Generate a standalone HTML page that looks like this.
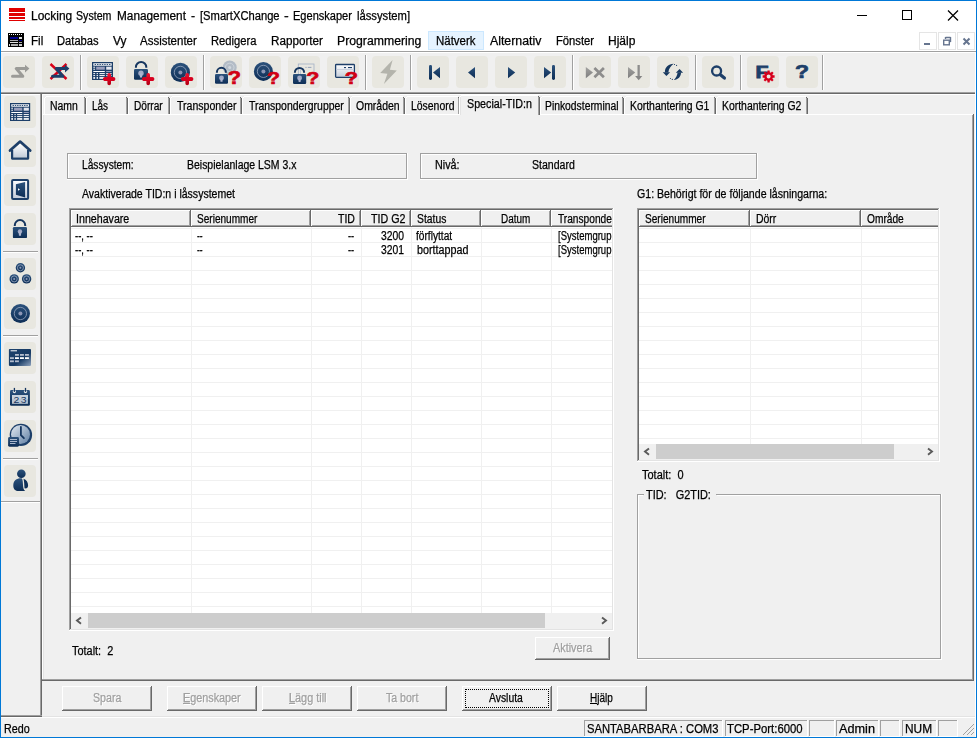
<!DOCTYPE html>
<html lang="sv"><head><meta charset="utf-8"><title>Locking System Management</title><style>
html,body{margin:0;padding:0}
body{width:977px;height:738px;overflow:hidden;background:#f0f0f0;position:relative;font-family:"Liberation Sans",sans-serif;}
body div,body span.t,body svg{position:absolute}
span.t{white-space:pre;display:block;transform-origin:0 0;-webkit-text-stroke:0.25px currentColor}
u{text-decoration:underline;text-underline-offset:1px}
</style></head><body>
<div style="left:0px;top:0px;width:977px;height:738px;background:#0078d7;"></div>
<div style="left:1px;top:1px;width:975px;height:50px;background:#ffffff;"></div>
<div style="left:1px;top:51px;width:975px;height:1px;background:#a0a0a0;"></div>
<div style="left:1px;top:52px;width:975px;height:1px;background:#ffffff;"></div>
<div style="left:1px;top:53px;width:975px;height:684px;background:#f0f0f0;"></div>
<div style="left:9px;top:8px;width:16px;height:4px;background:#e00000;"></div>
<div style="left:9px;top:13px;width:16px;height:3px;background:#e00000;"></div>
<div style="left:9px;top:17px;width:16px;height:2px;background:#e00000;"></div>
<div style="left:9px;top:20px;width:16px;height:1px;background:#e00000;"></div>
<span class="t" style="left:30.50px;top:8px;font-size:12px;line-height:16px;color:#000;transform:scaleX(0.9954);">Locking </span>
<span class="t" style="left:76.20px;top:8px;font-size:12px;line-height:16px;color:#000;transform:scaleX(0.8847);">System </span>
<span class="t" style="left:117.10px;top:8px;font-size:12px;line-height:16px;color:#000;transform:scaleX(0.9843);">Management </span>
<span class="t" style="left:190.80px;top:8px;font-size:12px;line-height:16px;color:#000;transform:scaleX(1.0250);">- </span>
<span class="t" style="left:200.00px;top:8px;font-size:12px;line-height:16px;color:#000;transform:scaleX(0.9323);">[SmartXChange </span>
<span class="t" style="left:284.30px;top:8px;font-size:12px;line-height:16px;color:#000;transform:scaleX(1.1750);">- </span>
<span class="t" style="left:292.90px;top:8px;font-size:12px;line-height:16px;color:#000;transform:scaleX(0.9196);">Egenskaper </span>
<span class="t" style="left:356.50px;top:8px;font-size:12px;line-height:16px;color:#000;transform:scaleX(0.9371);">låssystem]</span>
<svg style="left:850px;top:1px" width="126" height="30" viewBox="0 0 126 30"><g fill="none" stroke="#000" stroke-width="1"><path d="M7 14.500H17"/><rect x="52.5" y="9.5" width="9" height="9"/><path d="M98 9.500L108 19.500M108 9.500L98 19.500" stroke-width="1.250"/></g></svg>
<svg style="left:8px;top:33px" width="16" height="14" viewBox="0 0 16 14"><rect x="0" y="0" width="16" height="14" fill="#000"/><path d="M1 1h1v1h-1zM3 1h1v1h-1zM5 1h1v1h-1zM7 1h1v1h-1zM9 1h1v1h-1zM11 1h1v1h-1zM13 1h1v1h-1z" fill="#fff"/><rect x="2" y="4" width="8" height="2" fill="#00008b"/><rect x="11" y="4" width="3" height="2" fill="#ddd"/><rect x="2" y="7" width="8" height="1" fill="#aaa"/><rect x="11" y="7" width="3" height="1" fill="#00008b"/><rect x="2" y="9" width="8" height="1" fill="#ddd"/><rect x="11" y="9" width="3" height="1" fill="#aaa"/><rect x="1" y="11" width="1" height="2" fill="#ddd"/><rect x="3" y="11" width="7" height="2" fill="#aaa"/><rect x="11" y="11" width="3" height="2" fill="#ccc"/></svg>
<div style="left:428px;top:31px;width:56px;height:19px;background:#e5f3ff;box-sizing:border-box;border:1px solid #cce8ff"></div>
<span class="t" style="left:31.40px;top:33px;font-size:12px;line-height:16px;color:#000;transform:scaleX(0.9670);">Fil</span>
<span class="t" style="left:57.40px;top:33px;font-size:12px;line-height:16px;color:#000;transform:scaleX(0.9307);">Databas</span>
<span class="t" style="left:113.20px;top:33px;font-size:12px;line-height:16px;color:#000;transform:scaleX(0.9957);">Vy</span>
<span class="t" style="left:140.20px;top:33px;font-size:12px;line-height:16px;color:#000;transform:scaleX(0.9569);">Assistenter</span>
<span class="t" style="left:211.00px;top:33px;font-size:12px;line-height:16px;color:#000;transform:scaleX(0.9342);">Redigera</span>
<span class="t" style="left:271.30px;top:33px;font-size:12px;line-height:16px;color:#000;transform:scaleX(0.9744);">Rapporter</span>
<span class="t" style="left:337.00px;top:33px;font-size:12px;line-height:16px;color:#000;transform:scaleX(1.0205);">Programmering</span>
<span class="t" style="left:435.50px;top:33px;font-size:12px;line-height:16px;color:#000;transform:scaleX(0.9565);">Nätverk</span>
<span class="t" style="left:490.00px;top:33px;font-size:12px;line-height:16px;color:#000;transform:scaleX(1.0256);">Alternativ</span>
<span class="t" style="left:555.50px;top:33px;font-size:12px;line-height:16px;color:#000;transform:scaleX(0.9365);">Fönster</span>
<span class="t" style="left:608.30px;top:33px;font-size:12px;line-height:16px;color:#000;transform:scaleX(1.0010);">Hjälp</span>
<div style="left:919px;top:32px;width:18px;height:18px;background:#ffffff;box-sizing:border-box;border:1px solid #e5e5e5"></div>
<div style="left:938px;top:32px;width:18px;height:18px;background:#ffffff;box-sizing:border-box;border:1px solid #e5e5e5"></div>
<div style="left:957px;top:32px;width:18px;height:18px;background:#ffffff;box-sizing:border-box;border:1px solid #e5e5e5"></div>
<svg style="left:919px;top:32px" width="56" height="18" viewBox="0 0 56 18"><g fill="none" stroke="#66758f"><path d="M5 12h6" stroke-width="2"/><path d="M26.5 5.5h5M26.500 5v2M31.5 5v5M31.5 9.500h-1.500" stroke-width="1.400"/><rect x="24.700" y="8.200" width="5.600" height="4.600" stroke-width="1.400"/><path d="M44.500 6.500l6 6M50.500 6.500l-6 6" stroke-width="2"/></g></svg>
<div style="left:3px;top:56px;width:32px;height:32px;background:#e8e7e0;border-radius:4px"></div>
<div style="left:42px;top:56px;width:32px;height:32px;background:#e8e7e0;border-radius:4px"></div>
<div style="left:87px;top:56px;width:32px;height:32px;background:#e8e7e0;border-radius:4px"></div>
<div style="left:126px;top:56px;width:32px;height:32px;background:#e8e7e0;border-radius:4px"></div>
<div style="left:165px;top:56px;width:32px;height:32px;background:#e8e7e0;border-radius:4px"></div>
<div style="left:210px;top:56px;width:32px;height:32px;background:#e8e7e0;border-radius:4px"></div>
<div style="left:249px;top:56px;width:32px;height:32px;background:#e8e7e0;border-radius:4px"></div>
<div style="left:288px;top:56px;width:32px;height:32px;background:#e8e7e0;border-radius:4px"></div>
<div style="left:327px;top:56px;width:32px;height:32px;background:#e8e7e0;border-radius:4px"></div>
<div style="left:372px;top:56px;width:32px;height:32px;background:#e8e7e0;border-radius:4px"></div>
<div style="left:417px;top:56px;width:32px;height:32px;background:#e8e7e0;border-radius:4px"></div>
<div style="left:456px;top:56px;width:32px;height:32px;background:#e8e7e0;border-radius:4px"></div>
<div style="left:495px;top:56px;width:32px;height:32px;background:#e8e7e0;border-radius:4px"></div>
<div style="left:534px;top:56px;width:32px;height:32px;background:#e8e7e0;border-radius:4px"></div>
<div style="left:579px;top:56px;width:32px;height:32px;background:#e8e7e0;border-radius:4px"></div>
<div style="left:618px;top:56px;width:32px;height:32px;background:#e8e7e0;border-radius:4px"></div>
<div style="left:657px;top:56px;width:32px;height:32px;background:#e8e7e0;border-radius:4px"></div>
<div style="left:702px;top:56px;width:32px;height:32px;background:#e8e7e0;border-radius:4px"></div>
<div style="left:747px;top:56px;width:32px;height:32px;background:#e8e7e0;border-radius:4px"></div>
<div style="left:786px;top:56px;width:32px;height:32px;background:#e8e7e0;border-radius:4px"></div>
<div style="left:80px;top:55px;width:1px;height:35px;background:#a0a0a0;"></div>
<div style="left:81px;top:55px;width:1px;height:35px;background:#ffffff;"></div>
<div style="left:203px;top:55px;width:1px;height:35px;background:#a0a0a0;"></div>
<div style="left:204px;top:55px;width:1px;height:35px;background:#ffffff;"></div>
<div style="left:365px;top:55px;width:1px;height:35px;background:#a0a0a0;"></div>
<div style="left:366px;top:55px;width:1px;height:35px;background:#ffffff;"></div>
<div style="left:410px;top:55px;width:1px;height:35px;background:#a0a0a0;"></div>
<div style="left:411px;top:55px;width:1px;height:35px;background:#ffffff;"></div>
<div style="left:572px;top:55px;width:1px;height:35px;background:#a0a0a0;"></div>
<div style="left:573px;top:55px;width:1px;height:35px;background:#ffffff;"></div>
<div style="left:695px;top:55px;width:1px;height:35px;background:#a0a0a0;"></div>
<div style="left:696px;top:55px;width:1px;height:35px;background:#ffffff;"></div>
<div style="left:740px;top:55px;width:1px;height:35px;background:#a0a0a0;"></div>
<div style="left:741px;top:55px;width:1px;height:35px;background:#ffffff;"></div>
<div style="left:822px;top:55px;width:1px;height:35px;background:#a0a0a0;"></div>
<div style="left:823px;top:55px;width:1px;height:35px;background:#ffffff;"></div>
<div style="left:1px;top:92px;width:974px;height:1px;background:#a0a0a0;"></div>
<div style="left:1px;top:93px;width:974px;height:1px;background:#696969;"></div>
<div style="left:975px;top:53px;width:1px;height:684px;background:#ffffff;"></div>
<div style="left:1px;top:94px;width:974px;height:1px;background:#ffffff;"></div>
<svg style="left:0;top:56px" width="830" height="32" viewBox="0 0 830 32"><defs><linearGradient id="nv" x1="0" y1="0" x2="0" y2="1"><stop offset="0" stop-color="#2c527c"/><stop offset="1" stop-color="#0d2e56"/></linearGradient><linearGradient id="rd" x1="0" y1="0" x2="0" y2="1"><stop offset="0" stop-color="#e8102c"/><stop offset="1" stop-color="#b90016"/></linearGradient><linearGradient id="lt" x1="0" y1="0" x2="0" y2="1"><stop offset="0" stop-color="#ffffff"/><stop offset="1" stop-color="#c3ccd9"/></linearGradient><linearGradient id="gy" x1="0" y1="0" x2="0" y2="1"><stop offset="0" stop-color="#a2a2a0"/><stop offset="1" stop-color="#7e7e7e"/></linearGradient><linearGradient id="ck" x1="0" y1="0" x2="1" y2="1"><stop offset="0" stop-color="#e4ebf2"/><stop offset="1" stop-color="#5f7ea3"/></linearGradient><linearGradient id="tb" x1="0" y1="0" x2="1" y2="1"><stop offset="0" stop-color="#1d426d"/><stop offset="0.6" stop-color="#173a64"/><stop offset="1" stop-color="#8fa3bd"/></linearGradient></defs><g transform="translate(3 0)"><g transform="translate(0 0)"><path d="M9.500 20.300H19.800L13.200 12.600H23" fill="none" stroke="#9b9b97" stroke-width="3" stroke-linecap="round" stroke-linejoin="round"/><path d="M22 8.700L26.400 12.600L22 16.500Z" fill="#9b9b97"/></g></g><g transform="translate(42 0)"><path d="M8.500 8L24.500 23M24.500 8L8.500 23" stroke="#d80018" stroke-width="2.400" fill="none"/><g transform="translate(1 0)"><path d="M9.500 20.300H19.800L13.200 12.600H23" fill="none" stroke="#1d3f69" stroke-width="3" stroke-linecap="round" stroke-linejoin="round"/><path d="M22 8.700L26.400 12.600L22 16.500Z" fill="#1d3f69"/></g></g><g transform="translate(87 0)"><g transform="translate(5 6)"><rect x="0" y="0" width="21" height="18" fill="#1d3f69"/><rect x="1.300" y="1.300" width="18.400" height="2.400" fill="#fff"/><rect x="2.6" y="2.100" width="1.500" height="0.900" fill="#1d3f69"/><rect x="5.0" y="2.100" width="1.500" height="0.900" fill="#1d3f69"/><rect x="7.4" y="2.100" width="1.500" height="0.900" fill="#1d3f69"/><rect x="9.8" y="2.100" width="1.500" height="0.900" fill="#1d3f69"/><rect x="12.2" y="2.100" width="1.500" height="0.900" fill="#1d3f69"/><rect x="14.6" y="2.100" width="1.500" height="0.900" fill="#1d3f69"/><rect x="17.0" y="2.100" width="1.500" height="0.900" fill="#1d3f69"/><rect x="1.300" y="4.700" width="1.800" height="1" fill="#fff"/><rect x="1.300" y="6.700" width="1.800" height="1" fill="#fff"/><rect x="4.200" y="4.700" width="8.600" height="3" fill="#9a9fbd"/><rect x="14.200" y="4.700" width="5.400" height="3" fill="#e4e6ee"/><rect x="1.300" y="9" width="11.500" height="1" fill="#fff"/><rect x="14.200" y="9" width="5.400" height="1" fill="#9a9fbd"/><rect x="1.300" y="11.1" width="1.800" height="1" fill="#fff"/><rect x="4.600" y="11.1" width="1.400" height="1" fill="#fff"/><rect x="7.400" y="11.1" width="5.400" height="1" fill="#fff"/><rect x="14.200" y="11.1" width="5.400" height="1" fill="#fff"/><rect x="1.300" y="13.1" width="1.800" height="1" fill="#fff"/><rect x="4.600" y="13.1" width="1.400" height="1" fill="#fff"/><rect x="7.400" y="13.1" width="5.400" height="1" fill="#fff"/><rect x="14.200" y="13.1" width="5.400" height="1" fill="#fff"/><rect x="1.300" y="15.1" width="1.800" height="1.7" fill="#fff"/><rect x="4.600" y="15.1" width="1.400" height="1.7" fill="#fff"/><rect x="7.400" y="15.1" width="5.400" height="1.7" fill="#fff"/><rect x="14.200" y="15.1" width="5.400" height="1.7" fill="#fff"/></g><path d="M17.9 23.1H26.5M22.2 18.8V27.400000000000002" stroke="url(#rd)" stroke-width="3.600" stroke-linecap="round" fill="none"/><path d="M17.9 23.1H26.5" stroke="#d8001e" stroke-width="3.600" stroke-linecap="round" fill="none"/></g><g transform="translate(126 0)"><path d="M9.90 11.70V11.20A5.20 5.20 0 0 1 20.30 11.20V11.70" fill="none" stroke="#16365f" stroke-width="2.0"/><rect x="8" y="13" width="14" height="10.8" rx="1.200" fill="url(#nv)"/><circle cx="15.00" cy="17.32" r="2.70" fill="#a3abc8"/><rect x="13.90" y="17.32" width="2.200" height="4.3" rx="0.600" fill="#aeb5cf"/><path d="M17.9 23.1H26.5M22.2 18.8V27.400000000000002" stroke="url(#rd)" stroke-width="3.600" stroke-linecap="round" fill="none"/><path d="M17.9 23.1H26.5" stroke="#d8001e" stroke-width="3.600" stroke-linecap="round" fill="none"/></g><g transform="translate(165 0)"><circle cx="15.4" cy="16.4" r="9.6" fill="url(#nv)"/><circle cx="15.4" cy="16.4" r="6.14" fill="none" stroke="#a9b5ca" stroke-width="0.700"/><circle cx="15.4" cy="16.4" r="2.02" fill="#8d97b6"/><path d="M17.9 23.1H26.5M22.2 18.8V27.400000000000002" stroke="url(#rd)" stroke-width="3.600" stroke-linecap="round" fill="none"/><path d="M17.9 23.1H26.5" stroke="#d8001e" stroke-width="3.600" stroke-linecap="round" fill="none"/></g><g transform="translate(210 0)"><circle cx="19.7" cy="11.5" r="7.0" fill="#b3bcc6"/><circle cx="19.7" cy="11.5" r="4.3" fill="none" stroke="#d3d9df" stroke-width="0.800"/><circle cx="19.7" cy="11.5" r="1.5" fill="#d3d9df"/><path d="M6.90 16.70V16.30A4.50 4.50 0 0 1 15.90 16.30V16.70" fill="none" stroke="#16365f" stroke-width="2.0"/><rect x="5" y="18" width="13" height="9.75" rx="1.200" fill="url(#nv)"/><circle cx="11.50" cy="21.90" r="2.44" fill="#a3abc8"/><rect x="10.40" y="21.90" width="2.200" height="3.9" rx="0.600" fill="#aeb5cf"/><text transform="translate(24.40 27.70) scale(1.245 1)" text-anchor="middle" font-family="Liberation Sans, sans-serif" font-weight="bold" font-size="17.42" fill="#d10014" stroke="#d10014" stroke-width="0.6" stroke-linejoin="round">?</text></g><g transform="translate(249 0)"><circle cx="14.4" cy="15.4" r="9.5" fill="url(#nv)"/><circle cx="14.4" cy="15.4" r="6.08" fill="none" stroke="#a9b5ca" stroke-width="0.700"/><circle cx="14.4" cy="15.4" r="1.99" fill="#8d97b6"/><text transform="translate(24.50 27.70) scale(1.225 1)" text-anchor="middle" font-family="Liberation Sans, sans-serif" font-weight="bold" font-size="17.42" fill="#d10014" stroke="#d10014" stroke-width="0.6" stroke-linejoin="round">?</text></g><g transform="translate(288 0)"><rect x="10.300" y="8" width="15.700" height="12" fill="none" stroke="#a4b1c6" stroke-width="0.800"/><rect x="17.400" y="10.900" width="1.200" height="0.900" fill="#8c9bb5"/><rect x="19.800" y="10.900" width="3.600" height="0.900" fill="#8c9bb5"/><path d="M12.500 14V18" stroke="#a4b1c6" stroke-width="0.600"/><path d="M6.90 16.70V16.50A4.60 4.60 0 0 1 16.10 16.50V16.70" fill="none" stroke="#16365f" stroke-width="2.0"/><rect x="5" y="18" width="13.2" height="9.9" rx="1.200" fill="url(#nv)"/><circle cx="11.60" cy="21.96" r="2.48" fill="#a3abc8"/><rect x="10.50" y="21.96" width="2.200" height="4.0" rx="0.600" fill="#aeb5cf"/><text transform="translate(24.85 27.70) scale(1.235 1)" text-anchor="middle" font-family="Liberation Sans, sans-serif" font-weight="bold" font-size="17.42" fill="#d10014" stroke="#d10014" stroke-width="0.6" stroke-linejoin="round">?</text></g><g transform="translate(327 0)"><rect x="8.600" y="8.500" width="18.800" height="12.800" rx="0.800" fill="url(#lt)" stroke="#1d3f69" stroke-width="1.300"/><rect x="9.300" y="13" width="17.400" height="1" fill="#c9d0dd"/><rect x="17" y="11" width="2" height="1.100" fill="#1d3f69"/><rect x="21" y="11" width="4" height="1.100" fill="#1d3f69"/><text transform="translate(24.45 27.70) scale(1.255 1)" text-anchor="middle" font-family="Liberation Sans, sans-serif" font-weight="bold" font-size="17.42" fill="#d10014" stroke="#d10014" stroke-width="0.6" stroke-linejoin="round">?</text></g><g transform="translate(372 0)"><path d="M20.600 4L8.200 16.900L15.400 17.800L11.900 27.900L24.800 14.600L17.900 13.700Z" fill="#b4b4ac"/></g><g transform="translate(417 0)"><rect x="12" y="8.900" width="3" height="15.100" rx="1.400" fill="url(#nv)"/><path d="M16 16.500L23 10.900V22.200Z" fill="url(#nv)"/></g><g transform="translate(456 0)"><path d="M12 16.500L19 10.900V22.200Z" fill="url(#nv)"/></g><g transform="translate(495 0)"><path d="M20.2 16.500L13 10.900V22.200Z" fill="url(#nv)"/></g><g transform="translate(534 0)"><path d="M17.2 16.500L10 10.900V22.200Z" fill="url(#nv)"/><rect x="18" y="8.900" width="3" height="15.100" rx="1.400" fill="url(#nv)"/></g><g transform="translate(579 0)"><path d="M14 16.500L6.8 10.900V22.200Z" fill="url(#gy)"/><path d="M15.400 12L24.900 21.200M24.900 12L15.400 21.200" stroke="#8d8d8c" stroke-width="2.700" fill="none"/></g><g transform="translate(618 0)"><path d="M17.2 16.500L10 10.900V22.200Z" fill="url(#gy)"/><path d="M20.650 9V21" stroke="#8d8d8c" stroke-width="2.300"/><path d="M17.100 20L24.300 20L20.700 24.200Z" fill="#858585"/></g><g transform="translate(657 0)"><g fill="#17385f"><path d="M7.900 16.400C7.800 11.300 11.300 7.800 16.700 7.800C14.300 9.600 11.800 12.400 11.300 16.400Z"/><path d="M5.800 16.200H13.100L9.450 20.100Z"/><circle cx="17.500" cy="8.500" r="0.550"/><circle cx="19.600" cy="9.400" r="0.550"/><path d="M24 16.600C24.100 20.700 21.200 23.900 16.800 23.900C18.800 22.200 20.200 19.800 20.600 16.600Z"/><path d="M18.800 16.800H26.100L22.550 12.900Z"/><circle cx="15.300" cy="23.400" r="0.550"/><circle cx="13.400" cy="22.500" r="0.550"/></g></g><g transform="translate(702 0)"><circle cx="14.600" cy="15" r="4.500" fill="none" stroke="#1d3f69" stroke-width="2.300"/><path d="M18.700 19L22.400 22.100" stroke="#1d3f69" stroke-width="3.200" stroke-linecap="round"/></g><g transform="translate(747 0)"><text transform="translate(8.500 21.800) scale(1.250 1)" font-family="Liberation Sans, sans-serif" font-weight="bold" font-size="17.01" fill="#1d3f69" stroke="#1d3f69" stroke-width="0.9">F</text><path d="M27.59 19.36L27.59 21.64L25.84 21.66L25.42 22.68L26.65 23.93L25.03 25.55L23.78 24.32L22.76 24.74L22.74 26.49L20.46 26.49L20.44 24.74L19.42 24.32L18.17 25.55L16.55 23.93L17.78 22.68L17.36 21.66L15.61 21.64L15.61 19.36L17.36 19.34L17.78 18.32L16.55 17.07L18.17 15.45L19.42 16.68L20.44 16.26L20.46 14.51L22.74 14.51L22.76 16.26L23.78 16.68L25.03 15.45L26.65 17.07L25.42 18.32L25.84 19.34ZM23.60 20.5A2 2 0 1 0 19.60 20.5A2 2 0 1 0 23.60 20.5Z" fill="#d6001c" fill-rule="evenodd"/></g><g transform="translate(786 0)"><text transform="translate(16.00 22.25) scale(1.296 1)" text-anchor="middle" font-family="Liberation Sans, sans-serif" font-weight="bold" font-size="17.70" fill="#1d3f69" stroke="#1d3f69" stroke-width="0.7" stroke-linejoin="round">?</text></g></svg>
<div style="left:40px;top:94px;width:1px;height:623px;background:#a0a0a0;"></div>
<div style="left:41px;top:94px;width:1px;height:623px;background:#696969;"></div>
<div style="left:1px;top:715px;width:41px;height:1px;background:#a0a0a0;"></div>
<div style="left:1px;top:716px;width:41px;height:1px;background:#696969;"></div>
<div style="left:4px;top:96px;width:32px;height:32px;background:#e8e7e0;border-radius:4px"></div>
<div style="left:4px;top:135px;width:32px;height:32px;background:#e8e7e0;border-radius:4px"></div>
<div style="left:4px;top:174px;width:32px;height:32px;background:#e8e7e0;border-radius:4px"></div>
<div style="left:4px;top:213px;width:32px;height:32px;background:#e8e7e0;border-radius:4px"></div>
<div style="left:4px;top:258px;width:32px;height:32px;background:#e8e7e0;border-radius:4px"></div>
<div style="left:4px;top:297px;width:32px;height:32px;background:#e8e7e0;border-radius:4px"></div>
<div style="left:4px;top:342px;width:32px;height:32px;background:#e8e7e0;border-radius:4px"></div>
<div style="left:4px;top:381px;width:32px;height:32px;background:#e8e7e0;border-radius:4px"></div>
<div style="left:4px;top:420px;width:32px;height:32px;background:#e8e7e0;border-radius:4px"></div>
<div style="left:4px;top:465px;width:32px;height:32px;background:#e8e7e0;border-radius:4px"></div>
<div style="left:3px;top:251px;width:35px;height:1px;background:#a0a0a0;"></div>
<div style="left:3px;top:252px;width:35px;height:1px;background:#ffffff;"></div>
<div style="left:3px;top:335px;width:35px;height:1px;background:#a0a0a0;"></div>
<div style="left:3px;top:336px;width:35px;height:1px;background:#ffffff;"></div>
<div style="left:3px;top:458px;width:35px;height:1px;background:#a0a0a0;"></div>
<div style="left:3px;top:459px;width:35px;height:1px;background:#ffffff;"></div>
<div style="left:1px;top:501px;width:39px;height:1px;background:#a0a0a0;"></div>
<div style="left:1px;top:502px;width:39px;height:1px;background:#ffffff;"></div>
<svg style="left:4px;top:0" width="32" height="520" viewBox="0 0 32 520"><g transform="translate(0 96)"><g transform="translate(6 7) scale(0.962 1) translate(-6 -7)"><g transform="translate(6 7)"><rect x="0" y="0" width="21" height="18" fill="#1d3f69"/><rect x="1.300" y="1.300" width="18.400" height="2.400" fill="#fff"/><rect x="2.6" y="2.100" width="1.500" height="0.900" fill="#1d3f69"/><rect x="5.0" y="2.100" width="1.500" height="0.900" fill="#1d3f69"/><rect x="7.4" y="2.100" width="1.500" height="0.900" fill="#1d3f69"/><rect x="9.8" y="2.100" width="1.500" height="0.900" fill="#1d3f69"/><rect x="12.2" y="2.100" width="1.500" height="0.900" fill="#1d3f69"/><rect x="14.6" y="2.100" width="1.500" height="0.900" fill="#1d3f69"/><rect x="17.0" y="2.100" width="1.500" height="0.900" fill="#1d3f69"/><rect x="1.300" y="4.700" width="1.800" height="1" fill="#fff"/><rect x="1.300" y="6.700" width="1.800" height="1" fill="#fff"/><rect x="4.200" y="4.700" width="8.600" height="3" fill="#9a9fbd"/><rect x="14.200" y="4.700" width="5.400" height="3" fill="#e4e6ee"/><rect x="1.300" y="9" width="11.500" height="1" fill="#fff"/><rect x="14.200" y="9" width="5.400" height="1" fill="#9a9fbd"/><rect x="1.300" y="11.1" width="1.800" height="1" fill="#fff"/><rect x="4.600" y="11.1" width="1.400" height="1" fill="#fff"/><rect x="7.400" y="11.1" width="5.400" height="1" fill="#fff"/><rect x="14.200" y="11.1" width="5.400" height="1" fill="#fff"/><rect x="1.300" y="13.1" width="1.800" height="1" fill="#fff"/><rect x="4.600" y="13.1" width="1.400" height="1" fill="#fff"/><rect x="7.400" y="13.1" width="5.400" height="1" fill="#fff"/><rect x="14.200" y="13.1" width="5.400" height="1" fill="#fff"/><rect x="1.300" y="15.1" width="1.800" height="1.7" fill="#fff"/><rect x="4.600" y="15.1" width="1.400" height="1.7" fill="#fff"/><rect x="7.400" y="15.1" width="5.400" height="1.7" fill="#fff"/><rect x="14.200" y="15.1" width="5.400" height="1.7" fill="#fff"/></g></g></g><g transform="translate(0 135)"><path d="M9 15.500L16.100 8.800L23.200 15.500V22.600H9Z" fill="url(#lt)"/><path d="M8.100 15V23.600H24.100V15" fill="none" stroke="#1d3f69" stroke-width="2.200" stroke-linejoin="round"/><path d="M6 15.600L16.100 6.600L26.200 15.600" fill="none" stroke="#1d3f69" stroke-width="2.700" stroke-linecap="round" stroke-linejoin="round"/></g><g transform="translate(0 174)"><rect x="8.100" y="5.900" width="16" height="19.100" rx="1" fill="url(#lt)" stroke="#1d3f69" stroke-width="2"/><path d="M11.900 10.200L21.100 8V23.400L11.900 20.800Z" fill="url(#nv)"/><path d="M14 14.200L16 15.500L14 16.800Z" fill="#fff"/></g><g transform="translate(0 213)"><path d="M10.80 13.00V12.30A5.20 5.20 0 0 1 21.20 12.30V13.00" fill="none" stroke="#16365f" stroke-width="2.0"/><rect x="8.9" y="14" width="14.1" height="11.1" rx="1.200" fill="url(#nv)"/><circle cx="15.95" cy="18.44" r="2.20" fill="#a3abc8"/><rect x="14.85" y="18.44" width="2.200" height="4.4" rx="0.600" fill="#aeb5cf"/></g><g transform="translate(0 258)"><circle cx="16.4" cy="9.8" r="4.7" fill="url(#nv)"/><circle cx="16.4" cy="9.8" r="3.01" fill="none" stroke="#a9b5ca" stroke-width="0.700"/><circle cx="16.4" cy="9.8" r="0.99" fill="#8d97b6"/><circle cx="10.2" cy="20.9" r="4.7" fill="url(#nv)"/><circle cx="10.2" cy="20.9" r="3.01" fill="none" stroke="#a9b5ca" stroke-width="0.700"/><circle cx="10.2" cy="20.9" r="0.99" fill="#8d97b6"/><circle cx="22.6" cy="20.9" r="4.7" fill="url(#nv)"/><circle cx="22.6" cy="20.9" r="3.01" fill="none" stroke="#a9b5ca" stroke-width="0.700"/><circle cx="22.6" cy="20.9" r="0.99" fill="#8d97b6"/></g><g transform="translate(0 297)"><circle cx="16.4" cy="16.5" r="9.6" fill="url(#nv)"/><circle cx="16.4" cy="16.5" r="6.14" fill="none" stroke="#a9b5ca" stroke-width="0.700"/><circle cx="16.4" cy="16.5" r="2.02" fill="#8d97b6"/></g><g transform="translate(0 342)"><rect x="4.900" y="6.900" width="22.100" height="17" rx="0.800" fill="url(#tb)"/><rect x="6.600" y="8.300" width="6.400" height="1" fill="#fff"/><rect x="11" y="12" width="3.900" height="1.800" fill="#b3bccd"/><rect x="16" y="12" width="3.900" height="1.800" fill="#b3bccd"/><rect x="21" y="12" width="3.900" height="1.800" fill="#b3bccd"/><rect x="6" y="15.200" width="3.900" height="1.800" fill="#b3bccd"/><rect x="11" y="15.200" width="3.900" height="1.800" fill="#fff"/><rect x="16" y="15.200" width="3.900" height="1.800" fill="#fff"/><rect x="21" y="15.200" width="3.900" height="1.800" fill="#fff"/><rect x="6" y="18.400" width="3.900" height="1.800" fill="#b3bccd"/><rect x="11" y="18.400" width="3.900" height="1.800" fill="#b3bccd"/></g><g transform="translate(0 381)"><rect x="6" y="9.100" width="19.900" height="15.600" rx="1.300" fill="url(#nv)"/><rect x="8" y="14" width="15.900" height="8.800" fill="#b9c5d2"/><rect x="8" y="14" width="15.900" height="4" fill="#c9d3dd"/><circle cx="10.4" cy="10.600" r="1.600" fill="#eceeed"/><rect x="9.75" y="6.900" width="1.300" height="4" fill="#16365f"/><circle cx="21.5" cy="10.600" r="1.600" fill="#eceeed"/><rect x="20.85" y="6.900" width="1.300" height="4" fill="#16365f"/><text transform="translate(16.700 21.700) scale(1.120 1)" text-anchor="middle" font-family="Liberation Sans, sans-serif" font-size="9.3" letter-spacing="1.250" fill="#16365f">23</text></g><g transform="translate(0 420)"><circle cx="16.900" cy="14.900" r="11.200" fill="#1d3f69"/><circle cx="16.500" cy="14.500" r="9.500" fill="url(#ck)"/><path d="M16.900 6.800V15.200L19.900 18.200" fill="none" stroke="#16365f" stroke-width="1.800" stroke-linecap="round"/><rect x="4.100" y="17" width="10.900" height="9.700" rx="1.400" fill="url(#nv)"/><path d="M6 19.500H13M6 21.500H13M6 23.500H11.500" fill="none" stroke="#a9b8cd" stroke-width="1"/></g><g transform="translate(0 465)"><circle cx="17.350" cy="8.700" r="4.300" fill="url(#nv)"/><path d="M18 13.400C13 13 9.300 15.500 9.300 20.500C9.300 24.500 11.500 26 14.500 26H21.200C19.600 25 19.200 23 19 20C18.900 17 18.700 15 18 13.400Z" fill="url(#nv)"/><path d="M19.500 13.700C22.500 14.500 24.100 17.500 24.100 20.500C24.100 22.800 22.500 23.900 20.500 23.300C20.300 20 20.200 16.500 19.500 13.700Z" fill="#0f3058"/></g></svg>
<div style="left:42px;top:95px;width:1px;height:584px;background:#ffffff;"></div>
<div style="left:43px;top:115px;width:1px;height:564px;background:#e3e3e3;"></div>
<div style="left:43px;top:114px;width:931px;height:1px;background:#ffffff;"></div>
<div style="left:972px;top:115px;width:1px;height:566px;background:#a0a0a0;"></div>
<div style="left:973px;top:114px;width:1px;height:567px;background:#696969;"></div>
<div style="left:42px;top:679px;width:931px;height:1px;background:#a0a0a0;"></div>
<div style="left:42px;top:680px;width:932px;height:1px;background:#696969;"></div>
<div style="left:44px;top:98px;width:1px;height:16px;background:#ffffff;"></div>
<div style="left:46px;top:96px;width:38px;height:1px;background:#ffffff;"></div>
<div style="left:45px;top:97px;width:1px;height:1px;background:#ffffff;"></div>
<div style="left:84px;top:98px;width:1px;height:16px;background:#a0a0a0;"></div>
<div style="left:85px;top:98px;width:1px;height:16px;background:#696969;"></div>
<div style="left:84px;top:97px;width:1px;height:1px;background:#696969;"></div>
<span class="t" style="left:50.30px;top:98px;font-size:12px;line-height:16px;color:#000;transform:scaleX(0.8680);">Namn</span>
<div style="left:86px;top:98px;width:1px;height:16px;background:#ffffff;"></div>
<div style="left:88px;top:96px;width:38px;height:1px;background:#ffffff;"></div>
<div style="left:87px;top:97px;width:1px;height:1px;background:#ffffff;"></div>
<div style="left:126px;top:98px;width:1px;height:16px;background:#a0a0a0;"></div>
<div style="left:127px;top:98px;width:1px;height:16px;background:#696969;"></div>
<div style="left:126px;top:97px;width:1px;height:1px;background:#696969;"></div>
<span class="t" style="left:92.00px;top:98px;font-size:12px;line-height:16px;color:#000;transform:scaleX(0.8270);">Lås</span>
<div style="left:128px;top:98px;width:1px;height:16px;background:#ffffff;"></div>
<div style="left:130px;top:96px;width:38px;height:1px;background:#ffffff;"></div>
<div style="left:129px;top:97px;width:1px;height:1px;background:#ffffff;"></div>
<div style="left:168px;top:98px;width:1px;height:16px;background:#a0a0a0;"></div>
<div style="left:169px;top:98px;width:1px;height:16px;background:#696969;"></div>
<div style="left:168px;top:97px;width:1px;height:1px;background:#696969;"></div>
<span class="t" style="left:134.30px;top:98px;font-size:12px;line-height:16px;color:#000;transform:scaleX(0.8440);">Dörrar</span>
<div style="left:170px;top:98px;width:1px;height:16px;background:#ffffff;"></div>
<div style="left:172px;top:96px;width:68px;height:1px;background:#ffffff;"></div>
<div style="left:171px;top:97px;width:1px;height:1px;background:#ffffff;"></div>
<div style="left:240px;top:98px;width:1px;height:16px;background:#a0a0a0;"></div>
<div style="left:241px;top:98px;width:1px;height:16px;background:#696969;"></div>
<div style="left:240px;top:97px;width:1px;height:1px;background:#696969;"></div>
<span class="t" style="left:176.50px;top:98px;font-size:12px;line-height:16px;color:#000;transform:scaleX(0.8802);">Transponder</span>
<div style="left:242px;top:98px;width:1px;height:16px;background:#ffffff;"></div>
<div style="left:244px;top:96px;width:104px;height:1px;background:#ffffff;"></div>
<div style="left:243px;top:97px;width:1px;height:1px;background:#ffffff;"></div>
<div style="left:348px;top:98px;width:1px;height:16px;background:#a0a0a0;"></div>
<div style="left:349px;top:98px;width:1px;height:16px;background:#696969;"></div>
<div style="left:348px;top:97px;width:1px;height:1px;background:#696969;"></div>
<span class="t" style="left:248.80px;top:98px;font-size:12px;line-height:16px;color:#000;transform:scaleX(0.8701);">Transpondergrupper</span>
<div style="left:350px;top:98px;width:1px;height:16px;background:#ffffff;"></div>
<div style="left:352px;top:96px;width:51px;height:1px;background:#ffffff;"></div>
<div style="left:351px;top:97px;width:1px;height:1px;background:#ffffff;"></div>
<div style="left:403px;top:98px;width:1px;height:16px;background:#a0a0a0;"></div>
<div style="left:404px;top:98px;width:1px;height:16px;background:#696969;"></div>
<div style="left:403px;top:97px;width:1px;height:1px;background:#696969;"></div>
<span class="t" style="left:355.50px;top:98px;font-size:12px;line-height:16px;color:#000;transform:scaleX(0.8714);">Områden</span>
<div style="left:405px;top:98px;width:1px;height:16px;background:#ffffff;"></div>
<div style="left:407px;top:96px;width:51px;height:1px;background:#ffffff;"></div>
<div style="left:406px;top:97px;width:1px;height:1px;background:#ffffff;"></div>
<div style="left:458px;top:98px;width:1px;height:16px;background:#a0a0a0;"></div>
<div style="left:459px;top:98px;width:1px;height:16px;background:#696969;"></div>
<div style="left:458px;top:97px;width:1px;height:1px;background:#696969;"></div>
<span class="t" style="left:411.30px;top:98px;font-size:12px;line-height:16px;color:#000;transform:scaleX(0.8690);">Lösenord</span>
<div style="left:540px;top:98px;width:1px;height:16px;background:#ffffff;"></div>
<div style="left:542px;top:96px;width:80px;height:1px;background:#ffffff;"></div>
<div style="left:541px;top:97px;width:1px;height:1px;background:#ffffff;"></div>
<div style="left:622px;top:98px;width:1px;height:16px;background:#a0a0a0;"></div>
<div style="left:623px;top:98px;width:1px;height:16px;background:#696969;"></div>
<div style="left:622px;top:97px;width:1px;height:1px;background:#696969;"></div>
<span class="t" style="left:544.50px;top:98px;font-size:12px;line-height:16px;color:#000;transform:scaleX(0.8618);">Pinkodsterminal</span>
<div style="left:624px;top:98px;width:1px;height:16px;background:#ffffff;"></div>
<div style="left:626px;top:96px;width:88px;height:1px;background:#ffffff;"></div>
<div style="left:625px;top:97px;width:1px;height:1px;background:#ffffff;"></div>
<div style="left:714px;top:98px;width:1px;height:16px;background:#a0a0a0;"></div>
<div style="left:715px;top:98px;width:1px;height:16px;background:#696969;"></div>
<div style="left:714px;top:97px;width:1px;height:1px;background:#696969;"></div>
<span class="t" style="left:630.00px;top:98px;font-size:12px;line-height:16px;color:#000;transform:scaleX(0.8690);">Korthantering G1</span>
<div style="left:716px;top:98px;width:1px;height:16px;background:#ffffff;"></div>
<div style="left:718px;top:96px;width:88px;height:1px;background:#ffffff;"></div>
<div style="left:717px;top:97px;width:1px;height:1px;background:#ffffff;"></div>
<div style="left:806px;top:98px;width:1px;height:16px;background:#a0a0a0;"></div>
<div style="left:807px;top:98px;width:1px;height:16px;background:#696969;"></div>
<div style="left:806px;top:97px;width:1px;height:1px;background:#696969;"></div>
<span class="t" style="left:722.20px;top:98px;font-size:12px;line-height:16px;color:#000;transform:scaleX(0.8679);">Korthantering G2</span>
<div style="left:459px;top:95px;width:81px;height:20px;background:#f0f0f0;"></div>
<div style="left:459px;top:97px;width:1px;height:18px;background:#ffffff;"></div>
<div style="left:460px;top:97px;width:1px;height:18px;background:#e3e3e3;"></div>
<div style="left:461px;top:95px;width:77px;height:1px;background:#ffffff;"></div>
<div style="left:460px;top:96px;width:1px;height:1px;background:#ffffff;"></div>
<div style="left:538px;top:97px;width:1px;height:18px;background:#a0a0a0;"></div>
<div style="left:539px;top:97px;width:1px;height:18px;background:#696969;"></div>
<div style="left:538px;top:96px;width:1px;height:1px;background:#696969;"></div>
<span class="t" style="left:467.20px;top:96px;font-size:12px;line-height:16px;color:#000;transform:scaleX(0.8928);">Special-TID:n</span>
<div style="left:67px;top:153px;width:340px;height:1px;background:#a0a0a0;"></div>
<div style="left:68px;top:154px;width:338px;height:1px;background:#ffffff;"></div>
<div style="left:67px;top:178px;width:340px;height:1px;background:#a0a0a0;"></div>
<div style="left:67px;top:179px;width:341px;height:1px;background:#ffffff;"></div>
<div style="left:67px;top:153px;width:1px;height:26px;background:#a0a0a0;"></div>
<div style="left:68px;top:154px;width:1px;height:24px;background:#ffffff;"></div>
<div style="left:406px;top:153px;width:1px;height:26px;background:#a0a0a0;"></div>
<div style="left:407px;top:153px;width:1px;height:27px;background:#ffffff;"></div>
<span class="t" style="left:82.20px;top:157px;font-size:12px;line-height:16px;color:#000;transform:scaleX(0.8500);">Låssystem:</span>
<span class="t" style="left:187.30px;top:157px;font-size:12px;line-height:16px;color:#000;transform:scaleX(0.8724);">Beispielanlage LSM 3.x</span>
<div style="left:420px;top:153px;width:337px;height:1px;background:#a0a0a0;"></div>
<div style="left:421px;top:154px;width:335px;height:1px;background:#ffffff;"></div>
<div style="left:420px;top:178px;width:337px;height:1px;background:#a0a0a0;"></div>
<div style="left:420px;top:179px;width:338px;height:1px;background:#ffffff;"></div>
<div style="left:420px;top:153px;width:1px;height:26px;background:#a0a0a0;"></div>
<div style="left:421px;top:154px;width:1px;height:24px;background:#ffffff;"></div>
<div style="left:756px;top:153px;width:1px;height:26px;background:#a0a0a0;"></div>
<div style="left:757px;top:153px;width:1px;height:27px;background:#ffffff;"></div>
<span class="t" style="left:435.30px;top:157px;font-size:12px;line-height:16px;color:#000;transform:scaleX(0.8961);">Nivå:</span>
<span class="t" style="left:532.30px;top:157px;font-size:12px;line-height:16px;color:#000;transform:scaleX(0.8786);">Standard</span>
<span class="t" style="left:82.20px;top:186px;font-size:12px;line-height:16px;color:#000;transform:scaleX(0.8780);">Avaktiverade TID:n i låssystemet</span>
<span class="t" style="left:636.50px;top:186px;font-size:12px;line-height:16px;color:#000;transform:scaleX(0.8827);">G1: Behörigt för de följande låsningarna:</span>
<div style="left:69px;top:208px;width:545px;height:423px;background:#ffffff;"></div>
<div style="left:69px;top:208px;width:545px;height:1px;background:#a0a0a0;"></div>
<div style="left:69px;top:208px;width:1px;height:423px;background:#a0a0a0;"></div>
<div style="left:70px;top:209px;width:543px;height:1px;background:#696969;"></div>
<div style="left:70px;top:209px;width:1px;height:421px;background:#696969;"></div>
<div style="left:70px;top:629px;width:543px;height:1px;background:#e3e3e3;"></div>
<div style="left:612px;top:209px;width:1px;height:421px;background:#e3e3e3;"></div>
<div style="left:69px;top:630px;width:545px;height:1px;background:#ffffff;"></div>
<div style="left:613px;top:208px;width:1px;height:423px;background:#ffffff;"></div>
<div style="left:71px;top:228px;width:541px;height:1px;background:#f0f0f0;"></div>
<div style="left:71px;top:242px;width:541px;height:1px;background:#f0f0f0;"></div>
<div style="left:71px;top:256px;width:541px;height:1px;background:#f0f0f0;"></div>
<div style="left:71px;top:270px;width:541px;height:1px;background:#f0f0f0;"></div>
<div style="left:71px;top:284px;width:541px;height:1px;background:#f0f0f0;"></div>
<div style="left:71px;top:298px;width:541px;height:1px;background:#f0f0f0;"></div>
<div style="left:71px;top:312px;width:541px;height:1px;background:#f0f0f0;"></div>
<div style="left:71px;top:326px;width:541px;height:1px;background:#f0f0f0;"></div>
<div style="left:71px;top:340px;width:541px;height:1px;background:#f0f0f0;"></div>
<div style="left:71px;top:354px;width:541px;height:1px;background:#f0f0f0;"></div>
<div style="left:71px;top:368px;width:541px;height:1px;background:#f0f0f0;"></div>
<div style="left:71px;top:382px;width:541px;height:1px;background:#f0f0f0;"></div>
<div style="left:71px;top:396px;width:541px;height:1px;background:#f0f0f0;"></div>
<div style="left:71px;top:410px;width:541px;height:1px;background:#f0f0f0;"></div>
<div style="left:71px;top:424px;width:541px;height:1px;background:#f0f0f0;"></div>
<div style="left:71px;top:438px;width:541px;height:1px;background:#f0f0f0;"></div>
<div style="left:71px;top:452px;width:541px;height:1px;background:#f0f0f0;"></div>
<div style="left:71px;top:466px;width:541px;height:1px;background:#f0f0f0;"></div>
<div style="left:71px;top:480px;width:541px;height:1px;background:#f0f0f0;"></div>
<div style="left:71px;top:494px;width:541px;height:1px;background:#f0f0f0;"></div>
<div style="left:71px;top:508px;width:541px;height:1px;background:#f0f0f0;"></div>
<div style="left:71px;top:522px;width:541px;height:1px;background:#f0f0f0;"></div>
<div style="left:71px;top:536px;width:541px;height:1px;background:#f0f0f0;"></div>
<div style="left:71px;top:550px;width:541px;height:1px;background:#f0f0f0;"></div>
<div style="left:71px;top:564px;width:541px;height:1px;background:#f0f0f0;"></div>
<div style="left:71px;top:578px;width:541px;height:1px;background:#f0f0f0;"></div>
<div style="left:71px;top:592px;width:541px;height:1px;background:#f0f0f0;"></div>
<div style="left:71px;top:606px;width:541px;height:1px;background:#f0f0f0;"></div>
<div style="left:191px;top:227px;width:1px;height:386px;background:#f0f0f0;"></div>
<div style="left:311px;top:227px;width:1px;height:386px;background:#f0f0f0;"></div>
<div style="left:361px;top:227px;width:1px;height:386px;background:#f0f0f0;"></div>
<div style="left:411px;top:227px;width:1px;height:386px;background:#f0f0f0;"></div>
<div style="left:481px;top:227px;width:1px;height:386px;background:#f0f0f0;"></div>
<div style="left:551px;top:227px;width:1px;height:386px;background:#f0f0f0;"></div>
<div style="left:71px;top:210px;width:541px;height:17px;background:#f0f0f0;"></div>
<div style="left:71px;top:210px;width:541px;height:1px;background:#ffffff;"></div>
<div style="left:71px;top:225px;width:541px;height:1px;background:#a0a0a0;"></div>
<div style="left:71px;top:226px;width:541px;height:1px;background:#696969;"></div>
<div style="left:71px;top:210px;width:1px;height:16px;background:#ffffff;"></div>
<div style="left:189px;top:211px;width:1px;height:15px;background:#a0a0a0;"></div>
<div style="left:190px;top:210px;width:1px;height:17px;background:#696969;"></div>
<span class="t" style="left:76.41px;top:210.5px;font-size:12px;line-height:16px;color:#000;transform:scaleX(0.8876);">Innehavare</span>
<div style="left:191px;top:210px;width:1px;height:16px;background:#ffffff;"></div>
<div style="left:309px;top:211px;width:1px;height:15px;background:#a0a0a0;"></div>
<div style="left:310px;top:210px;width:1px;height:17px;background:#696969;"></div>
<span class="t" style="left:197.00px;top:210.5px;font-size:12px;line-height:16px;color:#000;transform:scaleX(0.8386);">Serienummer</span>
<div style="left:311px;top:210px;width:1px;height:16px;background:#ffffff;"></div>
<div style="left:359px;top:211px;width:1px;height:15px;background:#a0a0a0;"></div>
<div style="left:360px;top:210px;width:1px;height:17px;background:#696969;"></div>
<span class="t" style="left:337.50px;top:210.5px;font-size:12px;line-height:16px;color:#000;transform:scaleX(0.8747);">TID</span>
<div style="left:361px;top:210px;width:1px;height:16px;background:#ffffff;"></div>
<div style="left:409px;top:211px;width:1px;height:15px;background:#a0a0a0;"></div>
<div style="left:410px;top:210px;width:1px;height:17px;background:#696969;"></div>
<span class="t" style="left:370.60px;top:210.5px;font-size:12px;line-height:16px;color:#000;transform:scaleX(0.8924);">TID G2</span>
<div style="left:411px;top:210px;width:1px;height:16px;background:#ffffff;"></div>
<div style="left:479px;top:211px;width:1px;height:15px;background:#a0a0a0;"></div>
<div style="left:480px;top:210px;width:1px;height:17px;background:#696969;"></div>
<span class="t" style="left:417.10px;top:210.5px;font-size:12px;line-height:16px;color:#000;transform:scaleX(0.8613);">Status</span>
<div style="left:481px;top:210px;width:1px;height:16px;background:#ffffff;"></div>
<div style="left:549px;top:211px;width:1px;height:15px;background:#a0a0a0;"></div>
<div style="left:550px;top:210px;width:1px;height:17px;background:#696969;"></div>
<span class="t" style="left:500.70px;top:210.5px;font-size:12px;line-height:16px;color:#000;transform:scaleX(0.8289);">Datum</span>
<div style="left:551px;top:210px;width:1px;height:16px;background:#ffffff;"></div>
<span class="t" style="left:557.60px;top:210.5px;font-size:12px;line-height:16px;color:#000;transform:scaleX(0.8463);">Transponde</span>
<span class="t" style="left:75.00px;top:228px;font-size:12px;line-height:16px;color:#000;transform:scaleX(0.7901);">--, --</span>
<span class="t" style="left:197.40px;top:228px;font-size:12px;line-height:16px;color:#000;transform:scaleX(0.7128);">--</span>
<span class="t" style="left:348.30px;top:228px;font-size:12px;line-height:16px;color:#000;transform:scaleX(0.7754);">--</span>
<span class="t" style="left:381.20px;top:228px;font-size:12px;line-height:16px;color:#000;transform:scaleX(0.8623);">3200</span>
<span class="t" style="left:416.20px;top:228px;font-size:12px;line-height:16px;color:#000;transform:scaleX(0.8467);">förflyttat</span>
<span class="t" style="left:557.80px;top:228px;font-size:12px;line-height:16px;color:#000;transform:scaleX(0.7934);">[Systemgrup</span>
<span class="t" style="left:75.00px;top:242px;font-size:12px;line-height:16px;color:#000;transform:scaleX(0.7901);">--, --</span>
<span class="t" style="left:197.40px;top:242px;font-size:12px;line-height:16px;color:#000;transform:scaleX(0.7128);">--</span>
<span class="t" style="left:348.30px;top:242px;font-size:12px;line-height:16px;color:#000;transform:scaleX(0.7754);">--</span>
<span class="t" style="left:381.20px;top:242px;font-size:12px;line-height:16px;color:#000;transform:scaleX(0.8623);">3201</span>
<span class="t" style="left:416.70px;top:242px;font-size:12px;line-height:16px;color:#000;transform:scaleX(0.8958);">borttappad</span>
<span class="t" style="left:557.80px;top:242px;font-size:12px;line-height:16px;color:#000;transform:scaleX(0.7934);">[Systemgrup</span>
<div style="left:71px;top:613px;width:541px;height:16px;background:#f0f0f0;"></div>
<div style="left:88px;top:613px;width:457px;height:15px;background:#cdcdcd;"></div>
<svg style="left:71px;top:613px" width="541" height="16"><g fill="none" stroke="#5a5a5a" stroke-width="1.900"><path d="M10 4.500L6 7.600L10 10.700"/><path d="M531 4.500L535 7.600L531 10.700"/></g></svg>
<div style="left:637px;top:208px;width:303px;height:254px;background:#ffffff;"></div>
<div style="left:637px;top:208px;width:303px;height:1px;background:#a0a0a0;"></div>
<div style="left:637px;top:208px;width:1px;height:254px;background:#a0a0a0;"></div>
<div style="left:638px;top:209px;width:301px;height:1px;background:#696969;"></div>
<div style="left:638px;top:209px;width:1px;height:252px;background:#696969;"></div>
<div style="left:638px;top:460px;width:301px;height:1px;background:#e3e3e3;"></div>
<div style="left:938px;top:209px;width:1px;height:252px;background:#e3e3e3;"></div>
<div style="left:637px;top:461px;width:303px;height:1px;background:#ffffff;"></div>
<div style="left:939px;top:208px;width:1px;height:254px;background:#ffffff;"></div>
<div style="left:639px;top:228px;width:299px;height:1px;background:#f0f0f0;"></div>
<div style="left:639px;top:242px;width:299px;height:1px;background:#f0f0f0;"></div>
<div style="left:639px;top:256px;width:299px;height:1px;background:#f0f0f0;"></div>
<div style="left:639px;top:270px;width:299px;height:1px;background:#f0f0f0;"></div>
<div style="left:639px;top:284px;width:299px;height:1px;background:#f0f0f0;"></div>
<div style="left:639px;top:298px;width:299px;height:1px;background:#f0f0f0;"></div>
<div style="left:639px;top:312px;width:299px;height:1px;background:#f0f0f0;"></div>
<div style="left:639px;top:326px;width:299px;height:1px;background:#f0f0f0;"></div>
<div style="left:639px;top:340px;width:299px;height:1px;background:#f0f0f0;"></div>
<div style="left:639px;top:354px;width:299px;height:1px;background:#f0f0f0;"></div>
<div style="left:639px;top:368px;width:299px;height:1px;background:#f0f0f0;"></div>
<div style="left:639px;top:382px;width:299px;height:1px;background:#f0f0f0;"></div>
<div style="left:639px;top:396px;width:299px;height:1px;background:#f0f0f0;"></div>
<div style="left:639px;top:410px;width:299px;height:1px;background:#f0f0f0;"></div>
<div style="left:639px;top:424px;width:299px;height:1px;background:#f0f0f0;"></div>
<div style="left:639px;top:438px;width:299px;height:1px;background:#f0f0f0;"></div>
<div style="left:750px;top:227px;width:1px;height:217px;background:#f0f0f0;"></div>
<div style="left:861px;top:227px;width:1px;height:217px;background:#f0f0f0;"></div>
<div style="left:639px;top:210px;width:299px;height:17px;background:#f0f0f0;"></div>
<div style="left:639px;top:210px;width:299px;height:1px;background:#ffffff;"></div>
<div style="left:639px;top:225px;width:299px;height:1px;background:#a0a0a0;"></div>
<div style="left:639px;top:226px;width:299px;height:1px;background:#696969;"></div>
<div style="left:639px;top:210px;width:1px;height:16px;background:#ffffff;"></div>
<div style="left:748px;top:211px;width:1px;height:15px;background:#a0a0a0;"></div>
<div style="left:749px;top:210px;width:1px;height:17px;background:#696969;"></div>
<span class="t" style="left:645.40px;top:210.5px;font-size:12px;line-height:16px;color:#000;transform:scaleX(0.8413);">Serienummer</span>
<div style="left:750px;top:210px;width:1px;height:16px;background:#ffffff;"></div>
<div style="left:859px;top:211px;width:1px;height:15px;background:#a0a0a0;"></div>
<div style="left:860px;top:210px;width:1px;height:17px;background:#696969;"></div>
<span class="t" style="left:756.10px;top:210.5px;font-size:12px;line-height:16px;color:#000;transform:scaleX(0.8699);">Dörr</span>
<div style="left:861px;top:210px;width:1px;height:16px;background:#ffffff;"></div>
<span class="t" style="left:866.50px;top:210.5px;font-size:12px;line-height:16px;color:#000;transform:scaleX(0.8472);">Område</span>
<div style="left:639px;top:444px;width:299px;height:16px;background:#f0f0f0;"></div>
<div style="left:656px;top:444px;width:238px;height:15px;background:#cdcdcd;"></div>
<svg style="left:639px;top:444px" width="299" height="16"><g fill="none" stroke="#5a5a5a" stroke-width="1.900"><path d="M10 4.500L6 7.600L10 10.700"/><path d="M289 4.500L293 7.600L289 10.700"/></g></svg>
<span class="t" style="left:72.40px;top:643px;font-size:12px;line-height:16px;color:#000;transform:scaleX(0.9106);">Totalt:  2</span>
<span class="t" style="left:642.20px;top:467px;font-size:12px;line-height:16px;color:#000;transform:scaleX(0.9150);">Totalt:  0</span>
<div style="left:637px;top:494px;width:7px;height:1px;background:#a0a0a0;"></div>
<div style="left:638px;top:495px;width:5px;height:1px;background:#ffffff;"></div>
<div style="left:716px;top:494px;width:225px;height:1px;background:#a0a0a0;"></div>
<div style="left:717px;top:495px;width:223px;height:1px;background:#ffffff;"></div>
<div style="left:637px;top:658px;width:304px;height:1px;background:#a0a0a0;"></div>
<div style="left:637px;top:659px;width:305px;height:1px;background:#ffffff;"></div>
<div style="left:637px;top:494px;width:1px;height:165px;background:#a0a0a0;"></div>
<div style="left:638px;top:495px;width:1px;height:163px;background:#ffffff;"></div>
<div style="left:940px;top:494px;width:1px;height:165px;background:#a0a0a0;"></div>
<div style="left:941px;top:494px;width:1px;height:166px;background:#ffffff;"></div>
<span class="t" style="left:646.10px;top:487px;font-size:12px;line-height:16px;color:#000;transform:scaleX(0.9098);">TID:   G2TID:</span>
<div style="left:535px;top:637px;width:75px;height:23px;background:#f0f0f0;"></div>
<div style="left:535px;top:637px;width:74px;height:1px;background:#ffffff;"></div>
<div style="left:535px;top:637px;width:1px;height:22px;background:#ffffff;"></div>
<div style="left:536px;top:658px;width:73px;height:1px;background:#a0a0a0;"></div>
<div style="left:608px;top:638px;width:1px;height:21px;background:#a0a0a0;"></div>
<div style="left:535px;top:659px;width:75px;height:1px;background:#696969;"></div>
<div style="left:609px;top:637px;width:1px;height:23px;background:#696969;"></div>
<span class="t" style="left:553.00px;top:640px;font-size:12px;line-height:16px;color:#a0a0a0;transform:scaleX(0.9044);text-shadow:1px 1px 0 #fff;">Aktivera</span>
<div style="left:62px;top:686px;width:90px;height:25px;background:#f0f0f0;"></div>
<div style="left:62px;top:686px;width:89px;height:1px;background:#ffffff;"></div>
<div style="left:62px;top:686px;width:1px;height:24px;background:#ffffff;"></div>
<div style="left:63px;top:709px;width:88px;height:1px;background:#a0a0a0;"></div>
<div style="left:150px;top:687px;width:1px;height:23px;background:#a0a0a0;"></div>
<div style="left:62px;top:710px;width:90px;height:1px;background:#696969;"></div>
<div style="left:151px;top:686px;width:1px;height:25px;background:#696969;"></div>
<span class="t" style="left:92.80px;top:690px;font-size:12px;line-height:16px;color:#a0a0a0;transform:scaleX(0.8841);text-shadow:1px 1px 0 #fff;">Spara</span>
<div style="left:167px;top:686px;width:90px;height:25px;background:#f0f0f0;"></div>
<div style="left:167px;top:686px;width:89px;height:1px;background:#ffffff;"></div>
<div style="left:167px;top:686px;width:1px;height:24px;background:#ffffff;"></div>
<div style="left:168px;top:709px;width:88px;height:1px;background:#a0a0a0;"></div>
<div style="left:255px;top:687px;width:1px;height:23px;background:#a0a0a0;"></div>
<div style="left:167px;top:710px;width:90px;height:1px;background:#696969;"></div>
<div style="left:256px;top:686px;width:1px;height:25px;background:#696969;"></div>
<span class="t" style="left:182.50px;top:690px;font-size:12px;line-height:16px;color:#a0a0a0;transform:scaleX(0.9009);text-shadow:1px 1px 0 #fff;"><u>E</u>genskaper</span>
<div style="left:262px;top:686px;width:90px;height:25px;background:#f0f0f0;"></div>
<div style="left:262px;top:686px;width:89px;height:1px;background:#ffffff;"></div>
<div style="left:262px;top:686px;width:1px;height:24px;background:#ffffff;"></div>
<div style="left:263px;top:709px;width:88px;height:1px;background:#a0a0a0;"></div>
<div style="left:350px;top:687px;width:1px;height:23px;background:#a0a0a0;"></div>
<div style="left:262px;top:710px;width:90px;height:1px;background:#696969;"></div>
<div style="left:351px;top:686px;width:1px;height:25px;background:#696969;"></div>
<span class="t" style="left:288.70px;top:690px;font-size:12px;line-height:16px;color:#a0a0a0;transform:scaleX(0.9067);text-shadow:1px 1px 0 #fff;"><u>L</u>ägg till</span>
<div style="left:357px;top:686px;width:90px;height:25px;background:#f0f0f0;"></div>
<div style="left:357px;top:686px;width:89px;height:1px;background:#ffffff;"></div>
<div style="left:357px;top:686px;width:1px;height:24px;background:#ffffff;"></div>
<div style="left:358px;top:709px;width:88px;height:1px;background:#a0a0a0;"></div>
<div style="left:445px;top:687px;width:1px;height:23px;background:#a0a0a0;"></div>
<div style="left:357px;top:710px;width:90px;height:1px;background:#696969;"></div>
<div style="left:446px;top:686px;width:1px;height:25px;background:#696969;"></div>
<span class="t" style="left:386.20px;top:690px;font-size:12px;line-height:16px;color:#a0a0a0;transform:scaleX(0.8808);text-shadow:1px 1px 0 #fff;">Ta bort</span>
<div style="left:462px;top:686px;width:90px;height:25px;background:#f0f0f0;"></div>
<div style="left:462px;top:686px;width:89px;height:1px;background:#ffffff;"></div>
<div style="left:462px;top:686px;width:1px;height:24px;background:#ffffff;"></div>
<div style="left:463px;top:709px;width:88px;height:1px;background:#a0a0a0;"></div>
<div style="left:550px;top:687px;width:1px;height:23px;background:#a0a0a0;"></div>
<div style="left:462px;top:710px;width:90px;height:1px;background:#696969;"></div>
<div style="left:551px;top:686px;width:1px;height:25px;background:#696969;"></div>
<div style="left:465px;top:689px;width:84px;height:19px;background:transparent;box-sizing:border-box;border:1px dotted #000"></div>
<span class="t" style="left:488.80px;top:690px;font-size:12px;line-height:16px;color:#000;transform:scaleX(0.8641);">Avsluta</span>
<div style="left:557px;top:686px;width:90px;height:25px;background:#f0f0f0;"></div>
<div style="left:557px;top:686px;width:89px;height:1px;background:#ffffff;"></div>
<div style="left:557px;top:686px;width:1px;height:24px;background:#ffffff;"></div>
<div style="left:558px;top:709px;width:88px;height:1px;background:#a0a0a0;"></div>
<div style="left:645px;top:687px;width:1px;height:23px;background:#a0a0a0;"></div>
<div style="left:557px;top:710px;width:90px;height:1px;background:#696969;"></div>
<div style="left:646px;top:686px;width:1px;height:25px;background:#696969;"></div>
<span class="t" style="left:590.10px;top:690px;font-size:12px;line-height:16px;color:#000;transform:scaleX(0.8312);"><u>H</u>jälp</span>
<div style="left:42px;top:716px;width:933px;height:1px;background:#e3e3e3;"></div>
<div style="left:1px;top:717px;width:974px;height:1px;background:#ffffff;"></div>
<span class="t" style="left:3.80px;top:721px;font-size:12px;line-height:16px;color:#000;transform:scaleX(0.8961);">Redo</span>
<div style="left:584px;top:720px;width:138px;height:1px;background:#a0a0a0;"></div>
<div style="left:584px;top:720px;width:1px;height:16px;background:#a0a0a0;"></div>
<div style="left:722px;top:720px;width:1px;height:17px;background:#ffffff;"></div>
<div style="left:584px;top:736px;width:139px;height:1px;background:#ffffff;"></div>
<span class="t" style="left:586.60px;top:721px;font-size:12px;line-height:16px;color:#000;transform:scaleX(0.9359);">SANTABARBARA : COM3</span>
<div style="left:725px;top:720px;width:82px;height:1px;background:#a0a0a0;"></div>
<div style="left:725px;top:720px;width:1px;height:16px;background:#a0a0a0;"></div>
<div style="left:807px;top:720px;width:1px;height:17px;background:#ffffff;"></div>
<div style="left:725px;top:736px;width:83px;height:1px;background:#ffffff;"></div>
<span class="t" style="left:727.20px;top:721px;font-size:12px;line-height:16px;color:#000;transform:scaleX(0.9445);">TCP-Port:6000</span>
<div style="left:809px;top:720px;width:25px;height:1px;background:#a0a0a0;"></div>
<div style="left:809px;top:720px;width:1px;height:16px;background:#a0a0a0;"></div>
<div style="left:834px;top:720px;width:1px;height:17px;background:#ffffff;"></div>
<div style="left:809px;top:736px;width:26px;height:1px;background:#ffffff;"></div>
<div style="left:836px;top:720px;width:42px;height:1px;background:#a0a0a0;"></div>
<div style="left:836px;top:720px;width:1px;height:16px;background:#a0a0a0;"></div>
<div style="left:878px;top:720px;width:1px;height:17px;background:#ffffff;"></div>
<div style="left:836px;top:736px;width:43px;height:1px;background:#ffffff;"></div>
<span class="t" style="left:838.50px;top:721px;font-size:12px;line-height:16px;color:#000;transform:scaleX(1.0588);">Admin</span>
<div style="left:880px;top:720px;width:19px;height:1px;background:#a0a0a0;"></div>
<div style="left:880px;top:720px;width:1px;height:16px;background:#a0a0a0;"></div>
<div style="left:899px;top:720px;width:1px;height:17px;background:#ffffff;"></div>
<div style="left:880px;top:736px;width:20px;height:1px;background:#ffffff;"></div>
<div style="left:902px;top:720px;width:34px;height:1px;background:#a0a0a0;"></div>
<div style="left:902px;top:720px;width:1px;height:16px;background:#a0a0a0;"></div>
<div style="left:936px;top:720px;width:1px;height:17px;background:#ffffff;"></div>
<div style="left:902px;top:736px;width:35px;height:1px;background:#ffffff;"></div>
<span class="t" style="left:904.80px;top:721px;font-size:12px;line-height:16px;color:#000;transform:scaleX(0.9915);">NUM</span>
<div style="left:938px;top:720px;width:19px;height:1px;background:#a0a0a0;"></div>
<div style="left:938px;top:720px;width:1px;height:16px;background:#a0a0a0;"></div>
<div style="left:957px;top:720px;width:1px;height:17px;background:#ffffff;"></div>
<div style="left:938px;top:736px;width:20px;height:1px;background:#ffffff;"></div>
<svg style="left:961px;top:722px" width="14" height="14" viewBox="0 0 14 14"><g stroke="#a0a0a0" stroke-width="1"><path d="M13 2L2 13M13 6L6 13M13 10L10 13"/></g></svg>
</body></html>
